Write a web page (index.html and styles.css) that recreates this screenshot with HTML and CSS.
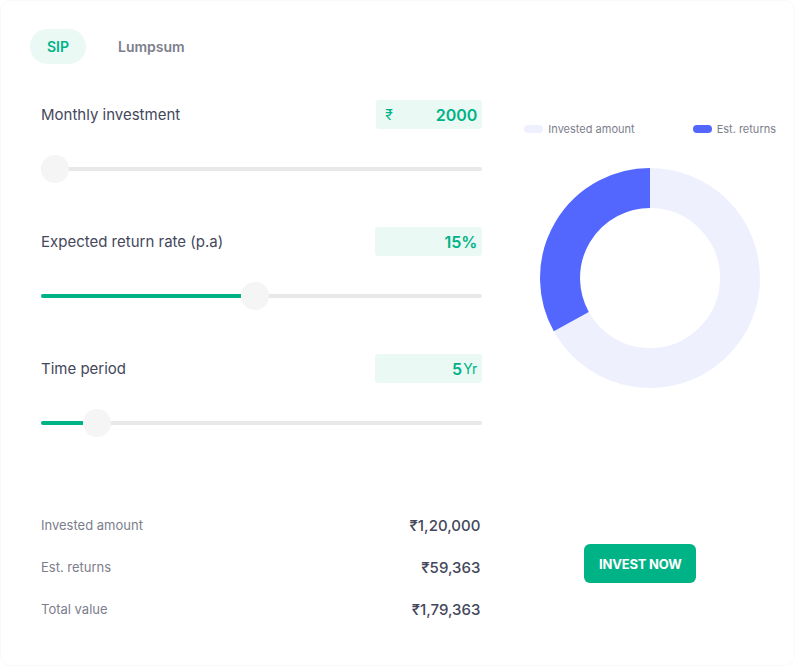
FILE: index.html
```html
<!DOCTYPE html>
<html lang="en">
<head>
<meta charset="utf-8">
<title>SIP Calculator</title>
<link rel="stylesheet" href="styles.css">
</head>
<body>
<div class="card">
  <div class="tabs">
    <div class="tab tab-active">SIP</div>
    <div class="tab">Lumpsum</div>
  </div>
  <div class="main">
    <div class="left">
      <div class="field">
        <div class="field-row">
          <span class="field-label">Monthly investment</span>
          <div class="field-box field-box-rupee"><span class="rupee">₹</span><span class="field-value">2000</span></div>
        </div>
        <div class="slider">
          <div class="track"><div class="fill" style="width:2px"></div></div>
          <div class="thumb" style="left:0px"></div>
        </div>
      </div>
      <div class="field">
        <div class="field-row">
          <span class="field-label">Expected return rate (p.a)</span>
          <div class="field-box"><span class="field-value">15%</span></div>
        </div>
        <div class="slider">
          <div class="track"><div class="fill" style="width:200px"></div></div>
          <div class="thumb" style="left:200px"></div>
        </div>
      </div>
      <div class="field field-last">
        <div class="field-row">
          <span class="field-label">Time period</span>
          <div class="field-box"><span class="field-value">5</span><span class="unit">Yr</span></div>
        </div>
        <div class="slider">
          <div class="track"><div class="fill" style="width:42px"></div></div>
          <div class="thumb" style="left:42px"></div>
        </div>
      </div>
      <div class="results">
        <div class="result-row"><span class="result-label">Invested amount</span><span class="result-value">₹1,20,000</span></div>
        <div class="result-row"><span class="result-label">Est. returns</span><span class="result-value">₹59,363</span></div>
        <div class="result-row"><span class="result-label">Total value</span><span class="result-value">₹1,79,363</span></div>
      </div>
    </div>
    <div class="right">
      <div class="legend">
        <div class="legend-item"><span class="swatch swatch-light"></span>Invested amount</div>
        <div class="legend-item"><span class="swatch swatch-blue"></span>Est. returns</div>
      </div>
      <svg class="donut" width="220" height="220" viewBox="0 0 220 220">
        <circle cx="110" cy="110" r="90" fill="none" stroke="#eef0fe" stroke-width="40"/>
        <path d="M110 20 A90 90 0 0 0 31.3 153.6" fill="none" stroke="#5367ff" stroke-width="40"/>
      </svg>
      <button class="invest-btn">INVEST NOW</button>
    </div>
  </div>
</div>
</body>
</html>
```

FILE: styles.css
```css
* { box-sizing: border-box; }
html, body { margin: 0; padding: 0; background: #ffffff; }
body {
  font-family: Inter, "Noto Sans", "DejaVu Sans", sans-serif;
  color: #44475b;
}
.card {
  width: 795px;
  height: 666px;
  background: #fff;
  border: 1px solid #f9f9f9;
  border-radius: 10px;
  padding: 28px 18px 0 29px;
  display: flex;
  flex-direction: column;
}
.tabs {
  display: flex;
  align-items: center;
  height: 35px;
}
.tab {
  font-size: 14px;
  font-weight: 600;
  color: #7c7e8c;
  height: 35px;
  display: flex;
  align-items: center;
  justify-content: center;
}
.tab-active {
  width: 56px;
  border-radius: 18px;
  background: #ebf9f5;
  color: #00b386;
  margin-right: 32px;
}
.main {
  display: flex;
  margin-top: 36px;
}
.left {
  width: 442px;
  margin-left: 11px;
  display: flex;
  flex-direction: column;
}
.field { margin-bottom: 44px; }
.field-last { margin-bottom: 0; }
.field-row {
  display: flex;
  justify-content: space-between;
  align-items: center;
  height: 29px;
}
.field-label {
  font-size: 15px;
  color: #44475b;
}
.field-box {
  width: 107px;
  height: 29px;
  background: #ebf9f5;
  border-radius: 3px;
  display: flex;
  align-items: center;
  justify-content: flex-end;
  padding: 0 5px 0 9px;
  color: #00b386;
}
.field-box-rupee { justify-content: space-between; width: 106px; }
.rupee { font-size: 14px; }
.field-value {
  font-size: 16px;
  font-weight: 600;
}
.unit {
  font-size: 14px;
  margin-left: 1px;
}
.slider {
  position: relative;
  margin-top: 26px;
  height: 28px;
  display: flex;
  align-items: center;
}
.track {
  width: 100%;
  height: 4px;
  background: #e8e8e8;
  border-radius: 2px;
  display: flex;
}
.fill {
  height: 100%;
  background: #00b386;
  border-radius: 2px 0 0 2px;
}
.thumb {
  position: absolute;
  top: 0;
  width: 28px;
  height: 28px;
  border-radius: 50%;
  background: #f5f5f5;
}
.results {
  margin-top: 67px;
  display: flex;
  flex-direction: column;
  padding-right: 2px;
}
.result-row {
  height: 42px;
  display: flex;
  justify-content: space-between;
  align-items: center;
}
.result-label {
  font-size: 13px;
  color: #7c7e8c;
}
.result-value {
  font-size: 15px;
  font-weight: 500;
  color: #44475b;
}
.right {
  width: 252px;
  margin-left: 42px;
  display: flex;
  flex-direction: column;
}
.legend {
  margin-top: 23px;
  height: 12px;
  display: flex;
  justify-content: space-between;
  align-items: center;
}
.legend-item {
  display: flex;
  align-items: center;
  font-size: 11px;
  color: #7c7e8c;
}
.swatch {
  width: 19px;
  height: 8px;
  border-radius: 4px;
  margin-right: 5px;
}
.swatch-light { background: #eef0fe; }
.swatch-blue { background: #5367ff; }
.donut {
  display: block;
  margin-top: 33px;
  margin-left: 16px;
}
.invest-btn {
  margin-top: 156px;
  margin-left: 60px;
  width: 112px;
  height: 39px;
  border: none;
  border-radius: 6px;
  background: #00b386;
  color: #fff;
  font-family: inherit;
  font-size: 13px;
  font-weight: 700;
  letter-spacing: -0.2px;
  cursor: pointer;
}
```
